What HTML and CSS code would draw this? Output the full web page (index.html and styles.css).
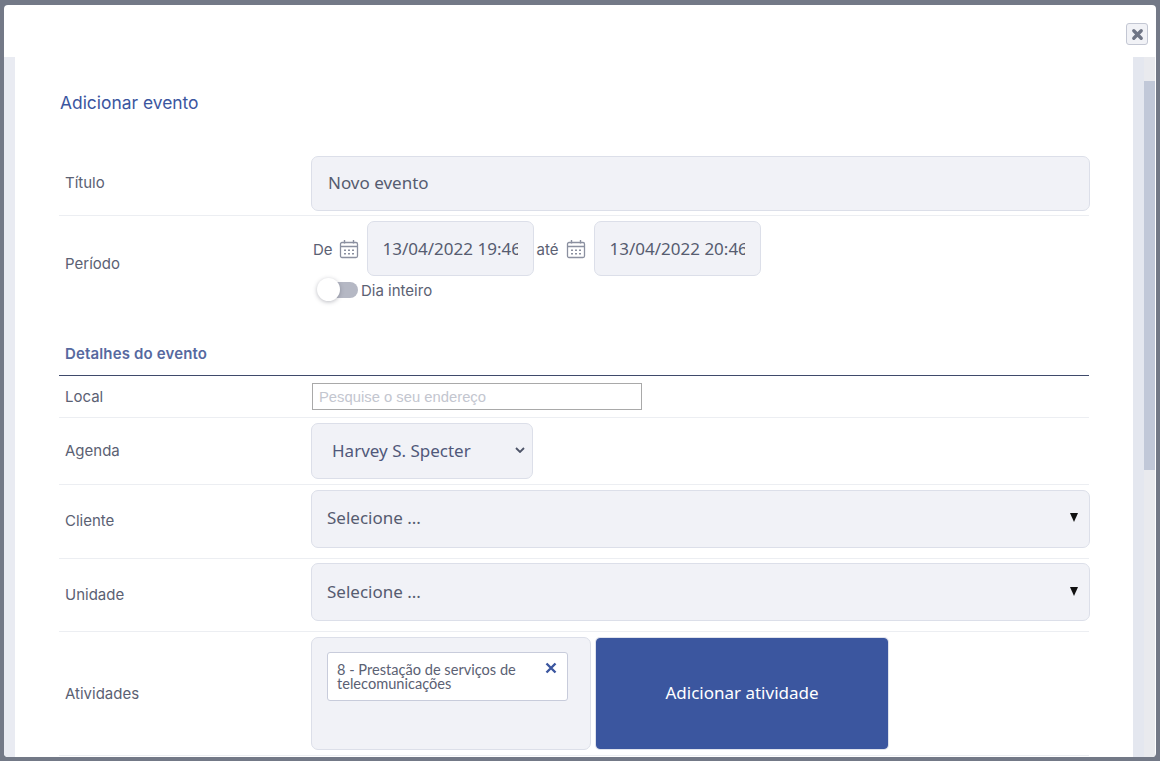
FILE: index.html
```html
<!DOCTYPE html>
<html lang="pt-BR">
<head>
<meta charset="utf-8">
<title>Adicionar evento</title>
<link rel="stylesheet" href="styles.css">
</head>
<body>
<div class="modal">
  <div class="modal-top">
    <button class="close" type="button" aria-label="Fechar">
      <svg viewBox="0 0 14 14" width="13" height="13"><path d="M3 3 L11 11 M11 3 L3 11" stroke="#6f7585" stroke-width="3.6" stroke-linecap="round"/></svg>
    </button>
  </div>
  <div class="modal-main">
    <div class="gutter"></div>
    <div class="content">
      <h1 class="title">Adicionar evento</h1>
      <div class="row row-titulo">
        <span class="label">Título</span>
        <input class="field field-title" value="Novo evento">
      </div>
      <div class="row row-periodo">
        <span class="label">Período</span>
        <div class="periodo">
          <div class="dates">
            <span class="small de">De</span>
            <svg class="cal" viewBox="0 0 20 20" width="20" height="20"><use href="#cal"/></svg>
            <input class="field field-date" value="13/04/2022 19:46">
            <span class="small ate">até</span>
            <svg class="cal" viewBox="0 0 20 20" width="20" height="20"><use href="#cal"/></svg>
            <input class="field field-date" value="13/04/2022 20:46">
          </div>
          <div class="toggle-line">
            <span class="toggle"><span class="knob"></span></span>
            <span class="small">Dia inteiro</span>
          </div>
        </div>
      </div>
      <h2 class="section">Detalhes do evento</h2>
      <div class="row row-local">
        <span class="label">Local</span>
        <input class="local" placeholder="Pesquise o seu endereço">
      </div>
      <div class="row row-agenda">
        <span class="label">Agenda</span>
        <div class="field agenda"><span>Harvey S. Specter</span>
          <svg viewBox="0 0 10 6" width="10" height="6"><path d="M1 1 L5 5 L9 1" fill="none" stroke="#4d5468" stroke-width="1.8"/></svg>
        </div>
      </div>
      <div class="row row-cliente">
        <span class="label">Cliente</span>
        <div class="field combo"><span>Selecione ...</span><i class="caret"></i></div>
      </div>
      <div class="row row-unidade">
        <span class="label">Unidade</span>
        <div class="field combo"><span>Selecione ...</span><i class="caret"></i></div>
      </div>
      <div class="row row-ativ">
        <span class="label">Atividades</span>
        <div class="ativ">
          <div class="field ativ-box">
            <div class="chip"><span>8 - Prestação de serviços de telecomunicações</span><b class="chip-x">
              <svg viewBox="0 0 12 12" width="12" height="12"><path d="M1.5 1.5 L10.5 10.5 M10.5 1.5 L1.5 10.5" stroke="#3b569f" stroke-width="2.4"/></svg></b></div>
          </div>
          <button class="add" type="button">Adicionar atividade</button>
        </div>
      </div>
    </div>
    <div class="gutter-right"></div>
    <div class="scrollbar"><div class="thumb"></div></div>
  </div>
</div>
<svg class="defs" width="0" height="0">
  <symbol id="cal" viewBox="0 0 20 20">
    <rect x="1.5" y="3.5" width="17" height="15" rx="1.5" fill="none" stroke="#8b90a0" stroke-width="1.3"/>
    <path d="M1.5 7.5 H18.5" stroke="#8b90a0" stroke-width="1.3"/>
    <path d="M5.5 1 V4.5 M14.5 1 V4.5" stroke="#8b90a0" stroke-width="1.4"/>
    <path d="M5 10.5h2v1.5H5zM9 10.5h2v1.5H9zM13 10.5h2v1.5h-2zM5 14h2v1.5H5zM9 14h2v1.5H9zM13 14h2v1.5h-2z" fill="#8b90a0"/>
  </symbol>
</svg>
</body>
</html>
```
FILE: styles.css
```css
* { box-sizing: border-box; }
html, body { margin: 0; height: 100%; }
body {
  background: #737987;
  padding: 5px 4px 4px;
  font-family: "Noto Sans", sans-serif;
  color: #5b6173;
  overflow: hidden;
}
.defs { position: absolute; }
.modal {
  height: 752px;
  background: #fff;
  border-radius: 4px;
  display: flex;
  flex-direction: column;
  overflow: hidden;
}
.modal-top {
  height: 52px;
  flex: none;
  display: flex;
  justify-content: flex-end;
  align-items: flex-start;
  padding: 18px 8px 0 0;
}
.close {
  width: 22px;
  height: 22px;
  padding: 0;
  background: #f1f2f6;
  border: 1px solid #c3c7d3;
  border-radius: 3px;
  display: flex;
  align-items: center;
  justify-content: center;
}
.modal-main { flex: 1; display: flex; min-height: 0; }
.gutter { width: 11px; flex: none; background: #e9ebf2; }
.gutter-right { width: 11px; flex: none; background: #e4e7ef; }
.scrollbar { width: 11px; flex: none; background: #e9eaee; padding-top: 24px; margin-right: 1px; }
.thumb { height: 389px; background: #c1c8d8; }
.content { flex: 1; padding: 0 44px 0 44px; min-width: 0; }
.title {
  margin: 35px 0 0;
  padding-left: 1px;
  height: 63px;
  font-family: "Inter", sans-serif;
  font-weight: 400;
  font-size: 17.4px;
  line-height: 22px;
  color: #3b569f;
}
.row {
  display: flex;
  align-items: center;
  border-bottom: 1px solid #eceef2;
}
.label {
  flex: none;
  width: 252px;
  padding-left: 6px;
  margin-bottom: 2px;
  font-family: "Inter", sans-serif;
  font-size: 15px;
  color: #5b6173;
}
.field {
  background: #f1f2f7;
  border: 1px solid #dcdfe9;
  border-radius: 7px;
  color: #565c70;
  font-family: "Noto Sans", sans-serif;
  font-size: 17px;
  outline: none;
}
.row-titulo { height: 61px; }
.row-titulo .label { margin-bottom: 5px; }
.field-title { width: 779px; height: 55px; padding: 0 16px 3px; margin-bottom: 3px; flex: none; }
.row-periodo { height: 96px; border: 0; align-items: flex-start; }
.row-periodo .label { margin-top: 38px; }
.periodo { padding: 5px 0 0 2px; }
.dates { display: flex; align-items: center; }
.small { font-family: "Inter", sans-serif; font-size: 15px; color: #5b6173; }
.dates .small { padding-top: 2px; }
.cal { margin: 0 8px 0 6px; flex: none; }
.ate { margin-left: 3px; }
.dates .ate + .cal { margin-left: 7px; margin-right: 8px; }
.field-date {
  width: 167px;
  height: 55px;
  padding: 0 15px;
  flex: none;
}
.toggle-line { display: flex; align-items: center; height: 26px; margin-top: 1px; }
.toggle {
  width: 36px;
  height: 16px;
  margin: -1px 3px 0 9px;
  background: #b5b8c4;
  border-radius: 8px;
  display: block;
  position: relative;
}
.knob {
  position: absolute;
  left: -5px;
  top: -4px;
  width: 23px;
  height: 23px;
  border-radius: 50%;
  background: #fff;
  box-shadow: 0 1px 4px rgba(60, 64, 80, 0.35);
}
.section {
  margin: 0;
  padding: 32px 0 0 6px;
  height: 64px;
  font-family: "Inter", sans-serif;
  font-size: 15px;
  font-weight: 600;
  line-height: 20px;
  letter-spacing: 0.15px;
  color: #56699f;
  border-bottom: 1px solid #3f4a6b;
}
.row-local { height: 42px; }
.row-local .label { margin-bottom: 0; }
.local {
  width: 330px;
  height: 27px;
  margin-left: 1px;
  padding: 0 6px;
  border: 1px solid #a9a9a9;
  background: #fff;
  font-family: "Liberation Sans", sans-serif;
  font-size: 14.8px;
  outline: none;
}
.local::placeholder { color: #c3c6cf; opacity: 1; }
.row-agenda { height: 67px; }
.agenda {
  width: 222px;
  height: 56px;
  padding: 0 7px 2px 20px;
  display: flex;
  align-items: center;
  justify-content: space-between;
  color: #50587a;
  flex: none;
}
.row-cliente { height: 74px; }
.row-unidade { height: 73px; }
.combo {
  width: 779px;
  height: 58px;
  margin-bottom: 6px;
  padding: 0 11px 2px 15px;
  display: flex;
  align-items: center;
  justify-content: space-between;
  flex: none;
}
.row-cliente .label, .row-unidade .label { margin-bottom: 2px; }
.caret {
  display: block;
  width: 0;
  height: 0;
  border-left: 4.5px solid transparent;
  border-right: 4.5px solid transparent;
  border-top: 9px solid #111;
}
.row-ativ { height: 124px; }
.row-ativ .label { margin-bottom: 0; }
.ativ { display: flex; gap: 5px; }
.ativ-box {
  width: 280px;
  height: 113px;
  padding: 14px 22px 0 15px;
}
.chip {
  height: 49px;
  background: #fff;
  border: 1px solid #c8ccdb;
  border-radius: 3px;
  padding: 10px 9px 0 9px;
  font-family: "Lato", sans-serif;
  font-size: 14.6px;
  line-height: 14px;
  color: #5b6173;
  display: flex;
  justify-content: space-between;
  align-items: flex-start;
}
.chip-x { flex: none; margin: -1px 1px 0 0; display: block; }
.add {
  width: 292px;
  height: 111px;
  margin-top: 1px;
  padding: 0 0 2px;
  background: #3b569f;
  color: #fff;
  border: 1px solid #3b569f;
  border-radius: 4px;
  box-shadow: 0 0 0 1px #dfe2ec;
  font-family: "Noto Sans", sans-serif;
  font-size: 17px;
}
```
